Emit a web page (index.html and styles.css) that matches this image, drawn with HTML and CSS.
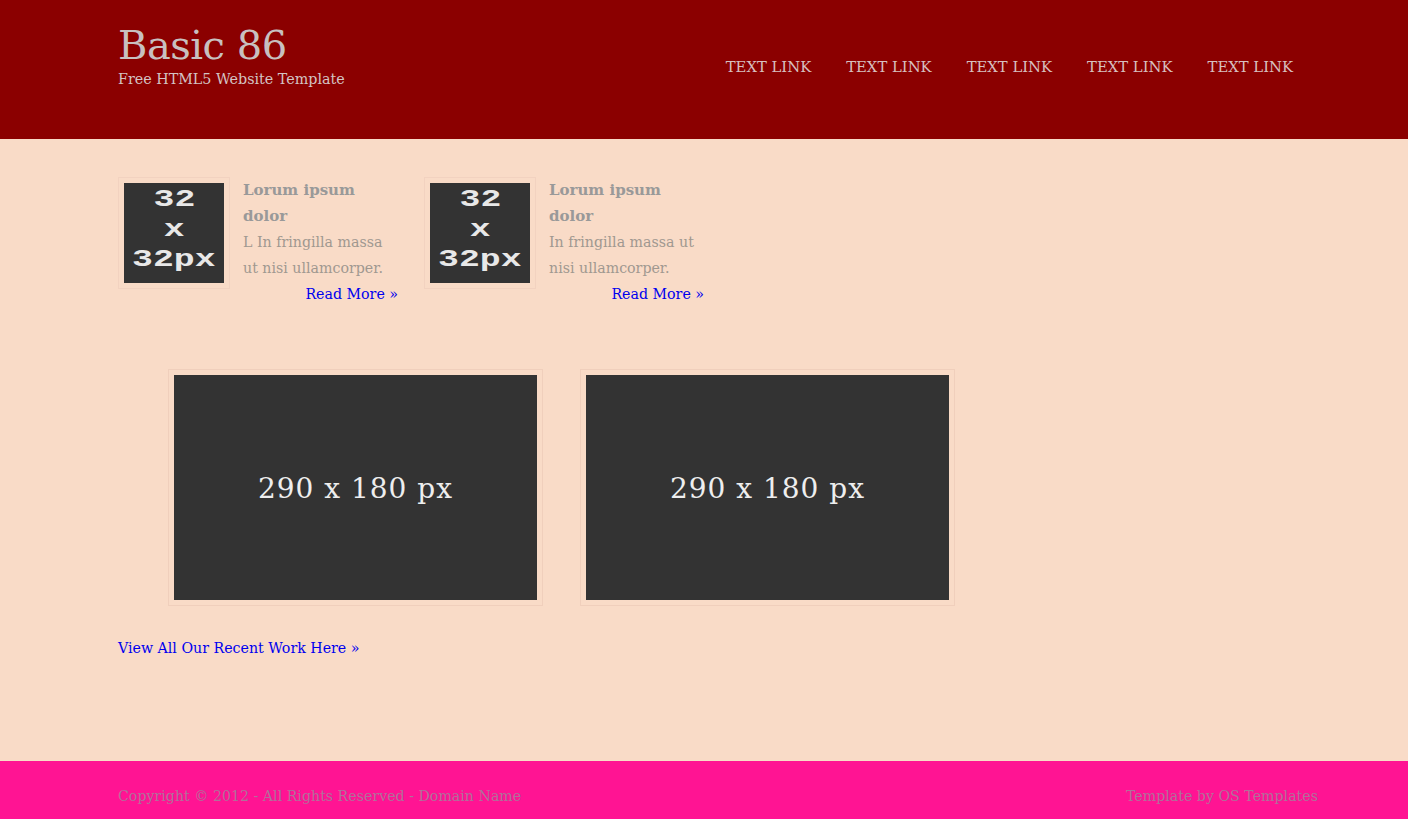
FILE: index.html
```html
<!DOCTYPE html>
<html>
<head>
<meta charset="utf-8">
<title>Basic 86</title>
<link rel="stylesheet" href="styles.css">
</head>
<body>
<header class="site-header">
  <div class="wrap header-inner">
    <div class="brand">
      <h1 class="logo">Basic 86</h1>
      <p class="tagline">Free HTML5 Website Template</p>
    </div>
    <nav class="nav">
      <a href="#">TEXT LINK</a>
      <a href="#">TEXT LINK</a>
      <a href="#">TEXT LINK</a>
      <a href="#">TEXT LINK</a>
      <a href="#">TEXT LINK</a>
    </nav>
  </div>
</header>
<main class="content">
  <div class="wrap">
    <div class="services">
      <div class="service">
        <div class="thumb-frame"><div class="thumb"><span>32</span><span>x</span><span>32px</span></div></div>
        <div class="service-text">
          <h2>Lorum ipsum dolor</h2>
          <p>L In fringilla massa ut nisi ullamcorper.</p>
          <a class="more" href="#">Read More &raquo;</a>
        </div>
      </div>
      <div class="service">
        <div class="thumb-frame"><div class="thumb"><span>32</span><span>x</span><span>32px</span></div></div>
        <div class="service-text">
          <h2>Lorum ipsum dolor</h2>
          <p>In fringilla massa ut nisi ullamcorper.</p>
          <a class="more" href="#">Read More &raquo;</a>
        </div>
      </div>
    </div>
    <div class="gallery">
      <div class="photo-frame"><div class="photo">290 x 180 px</div></div>
      <div class="photo-frame"><div class="photo">290 x 180 px</div></div>
    </div>
    <a class="view-all" href="#">View All Our Recent Work Here &raquo;</a>
  </div>
</main>
<footer class="site-footer">
  <div class="wrap footer-inner">
    <p>Copyright &copy; 2012 - All Rights Reserved - <a href="#">Domain Name</a></p>
    <p>Template by <a href="#">OS Templates</a></p>
  </div>
</footer>
</body>
</html>
```

FILE: styles.css
```css
* { box-sizing: border-box; }
html, body { margin: 0; padding: 0; }
body {
  font-family: "DejaVu Serif", Georgia, "Liberation Serif", serif;
  font-size: 14.2px;
  line-height: 26px;
  background: #f9dbc7;
  color: #999;
  height: 819px;
  display: flex;
  flex-direction: column;
}
a { text-decoration: none; }
.wrap { width: 1200px; margin: 0 0 0 118px; }

.site-header { background: #8b0000; height: 139px; }
.header-inner { display: flex; justify-content: space-between; align-items: flex-start; padding-top: 22px; }
.logo { margin: 0; font-weight: normal; font-size: 40px; line-height: 46px; color: #c8c0c0; letter-spacing: -0.5px; }
.tagline { margin: 0; font-size: 14.3px; line-height: 22px; color: #d4c4c4; }
.nav { display: flex; gap: 35px; margin-top: 34px; margin-right: 25px; }
.nav a { color: #d8c0c0; font-size: 14.8px; line-height: 22px; }

.content { flex: 1; }
.services { display: flex; gap: 26px; margin-top: 38px; }
.service { width: 280px; display: flex; align-items: flex-start; gap: 13px; }
.thumb-frame { flex: none; width: 112px; height: 112px; border: 1px solid #f2d2c0; padding: 5px; }
.thumb {
  width: 100px; height: 100px; background: #333;
  color: #e8e8e8; font-family: "Liberation Mono", "DejaVu Sans Mono", monospace;
  font-weight: bold; font-size: 24px; line-height: 30px; text-align: center;
  padding-top: 2px; display: flex; flex-direction: column; align-items: center;
}
.thumb span { display: block; transform: scaleX(1.45); }
.service-text { flex: 1; display: flex; flex-direction: column; }
.service-text h2 { margin: 0; font-size: 15px; line-height: 26px; font-weight: bold; color: #999; }
.service-text p { margin: 0; color: #a09890; }
.more { align-self: flex-end; color: #0000ee; }

.gallery { display: flex; gap: 37px; margin: 62px 0 0 50px; }
.photo-frame { width: 375px; height: 237px; border: 1px solid #f0cfbc; padding: 5px; }
.photo {
  width: 100%; height: 100%; background: #333; color: #eee;
  display: flex; align-items: center; justify-content: center;
  font-size: 28px; letter-spacing: 1px; padding-top: 2px;
}
.view-all { display: inline-block; color: #0000ee; margin-top: 29px; }

.site-footer { background: #ff1493; height: 58px; }
.footer-inner { display: flex; justify-content: space-between; padding-top: 22px; }
.footer-inner p { margin: 0; color: #b0709a; line-height: 26px; }
.footer-inner a { color: #b0709a; }
```
